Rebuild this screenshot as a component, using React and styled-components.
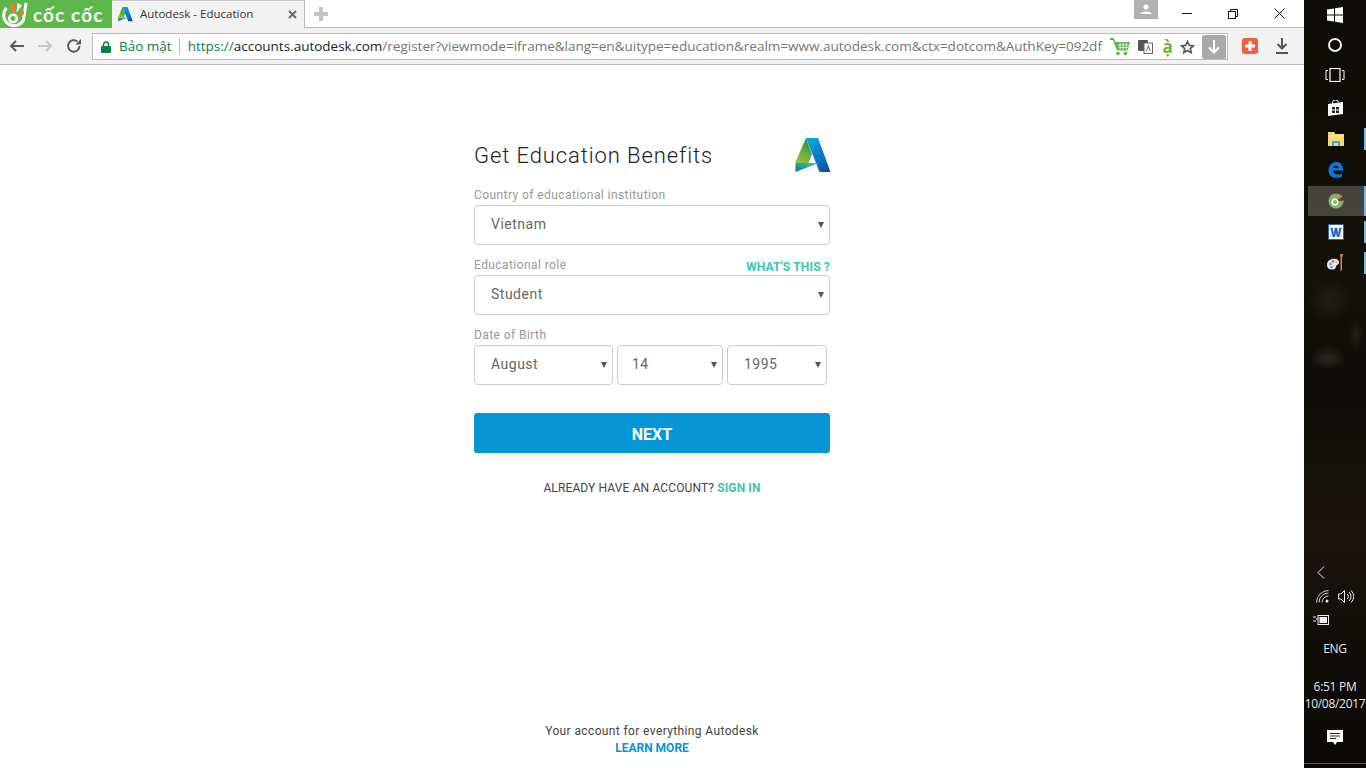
import React from 'react';
import styled, { createGlobalStyle } from 'styled-components';

const Global = createGlobalStyle`
    html, body { margin: 0; padding: 0; height: 100%; background: #fff; overflow: hidden; }
    #root { height: 100%; }
    * { box-sizing: border-box; }
`;

const Screen = styled.div`
    display: flex;
    width: 1366px;
    height: 768px;
    overflow: hidden;
`;

const Browser = styled.div`
    display: flex;
    flex-direction: column;
    width: 1304px;
    height: 100%;
    background: #fff;
`;

const TabStrip = styled.div`
    display: flex;
    align-items: stretch;
    height: 28px;
    border-bottom: 1px solid #b8b8b8;
    padding-right: 2px;
`;

const Brand = styled.div`
    display: flex;
    align-items: center;
    gap: 4px;
    width: 112px;
    height: 28px;
    background: #5cb84a;
    padding-left: 1px;
    color: #fff;
    font: 700 19px "Lato", sans-serif;
    letter-spacing: 1.1px;
    white-space: nowrap;
`;

const Tab = styled.div`
    display: flex;
    align-items: center;
    width: 193px;
    height: 28px;
    padding: 0 7px 0 6px;
    background: #f2f2f2;
    border-right: 1px solid #b8b8b8;
    border-top: 1px solid #c8c8c8;
    color: #333;
    font: 11.5px "Open Sans", sans-serif;
    gap: 7px;
`;

const TabTitle = styled.span`
    flex: 1;
    white-space: nowrap;
    padding-bottom: 2px;
`;

const NewTab = styled.div`
    display: flex;
    align-items: center;
    padding-left: 9px;
    height: 27px;
`;

const Avatar = styled.div`
    display: flex;
    align-items: center;
    justify-content: center;
    margin-left: auto;
    margin-right: 6px;
    width: 24px;
    height: 19px;
    background: #b1b1b1;
`;

const WinButton = styled.div`
    display: flex;
    align-items: center;
    justify-content: center;
    width: 46px;
    height: 27px;
`;

const Toolbar = styled.div`
    display: flex;
    align-items: center;
    height: 37px;
    background: #f2f2f2;
    border-bottom: 1px solid #b9b9b9;
    padding-left: 8px;
`;

const NavButton = styled.div`
    display: flex;
    align-items: center;
    justify-content: center;
    width: 18px;
    height: 18px;
    margin-right: ${(p) => p.$gap}px;
`;

const Omnibox = styled.div`
    display: flex;
    align-items: center;
    width: 1136px;
    height: 27px;
    margin-top: 1px;
    background: #fff;
    border: 1px solid #bdbdbd;
    padding: 0 1px 0 8px;
    font: 13.5px "Open Sans", sans-serif;
    white-space: nowrap;
`;

const Secure = styled.span`
    color: #0b8043;
    margin-left: 8px;
    padding-right: 7px;
    border-right: 1px solid #bdbdbd;
    line-height: 17px;
    margin-bottom: 1px;
`;

const Url = styled.span`
    margin-left: 8px;
    width: 922px;
    overflow: hidden;
    color: #757575;
    padding-bottom: 2px;
`;

const UrlScheme = styled.span`
    color: #0b8043;
`;

const UrlHost = styled.span`
    color: #222;
`;

const BoxIcon = styled.span`
    display: flex;
    align-items: center;
    justify-content: center;
    width: ${(p) => p.$w}px;
    height: 24px;
`;

const Accent = styled.span`
    color: #5fb83f;
    font: 700 17px "Open Sans", sans-serif;
`;

const GreyDownload = styled.span`
    display: flex;
    align-items: center;
    justify-content: center;
    width: 24px;
    height: 24px;
    background: #a9a9a9;
    border-radius: 2px;
`;

const ExtensionRow = styled.div`
    display: flex;
    align-items: center;
    gap: 16px;
    margin-left: 14px;
`;

const Page = styled.main`
    flex: 1;
    display: flex;
    flex-direction: column;
    align-items: center;
    font-family: "Roboto", sans-serif;
    padding-bottom: 11px;
`;

const Form = styled.form`
    width: 356px;
    margin-top: 73px;
`;

const Heading = styled.div`
    display: flex;
    align-items: flex-start;
    justify-content: space-between;
    height: 47px;
    margin-right: -1px;
`;

const Title = styled.h1`
    margin: 5px 0 0;
    font-size: 22px;
    line-height: 26px;
    font-weight: 300;
    letter-spacing: 0.9px;
    color: #222;
`;

const LabelRow = styled.div`
    display: flex;
    justify-content: space-between;
    align-items: flex-end;
    height: 20px;
`;

const Label = styled.label`
    font-size: 12px;
    line-height: 16px;
    letter-spacing: 0.42px;
    color: #999;
    padding-bottom: 2px;
`;

const Help = styled.a`
    font-size: 12px;
    line-height: 14px;
    font-weight: 700;
    letter-spacing: 0.17px;
    color: #3cc4b4;
    margin-bottom: 1px;
`;

const SelectWrap = styled.div`
    position: relative;
    width: ${(p) => p.$w}px;
    height: 40px;

    &::after {
        content: '';
        position: absolute;
        right: 6px;
        top: 17px;
        border-left: 3px solid transparent;
        border-right: 3px solid transparent;
        border-top: 6px solid #555;
        pointer-events: none;
    }
`;

const Select = styled.select`
    appearance: none;
    display: block;
    width: 100%;
    height: 100%;
    padding: 0 0 2px ${(p) => p.$pad}px;
    border: 1px solid #ccc;
    border-radius: 4px;
    background: #fff;
    font: 14px "Roboto", sans-serif;
    letter-spacing: 0.5px;
    color: #666;
`;

const Field = styled.div`
    margin-bottom: 10px;
`;

const DateRow = styled.div`
    display: flex;
    gap: 4px;
`;

const Next = styled.button`
    display: block;
    width: 100%;
    height: 40px;
    margin-top: 28px;
    padding: 2px 0 0;
    border: 0;
    border-radius: 3px;
    background: #0696d7;
    color: #fff;
    font: 700 16px "Roboto", sans-serif;
`;

const SignInLine = styled.p`
    margin: 27px 0 0;
    text-align: center;
    font-size: 12px;
    line-height: 16px;
    letter-spacing: 0.13px;
    color: #444;
`;

const SignIn = styled.a`
    font-weight: 700;
    color: #3cc4b4;
`;

const Footer = styled.footer`
    margin-top: auto;
    text-align: center;
    font-size: 12px;
    line-height: 17px;
    letter-spacing: 0.38px;
    color: #444;
`;

const LearnMore = styled.a`
    display: block;
    font-weight: 700;
    letter-spacing: 0;
    color: #0696d7;
`;

const Taskbar = styled.aside`
    display: flex;
    flex-direction: column;
    width: 62px;
    height: 100%;
    color: #e8e8e8;
    background:
        radial-gradient(ellipse 18px 12px at 24px 358px, rgba(90, 84, 70, 0.4), transparent),
        radial-gradient(ellipse 22px 22px at 26px 300px, rgba(60, 56, 46, 0.35), transparent),
        radial-gradient(ellipse 8px 18px at 52px 335px, rgba(70, 64, 54, 0.3), transparent),
        linear-gradient(180deg, #0d0b07 0%, #14110a 35%, #0e0c09 50%, #1a150d 70%, #0f0c08 85%, #0a0806 100%);
    font: 12px "Open Sans", sans-serif;
`;

const SystemRow = styled.div`
    display: flex;
    align-items: center;
    justify-content: center;
    width: 100%;
    height: 30px;
    padding-left: 1px;
    padding-right: 1px;
`;

const Apps = styled.div`
    margin-top: 3px;
`;

const AppRow = styled.div`
    position: relative;
    display: flex;
    align-items: center;
    justify-content: center;
    height: ${(p) => p.$active ? 30 : 31}px;
    margin-bottom: ${(p) => p.$active ? 1 : 0}px;
    padding-left: ${(p) => p.$active ? 0 : 1}px;
    padding-bottom: 1px;
    margin-left: ${(p) => (p.$active ? '4px' : '0')};
    padding-right: ${(p) => (p.$active ? '3px' : '0')};
    background: ${(p) => (p.$active ? 'rgba(255,255,255,0.22)' : 'transparent')};

    &::after {
        content: '';
        display: ${(p) => (p.$open ? 'block' : 'none')};
        position: absolute;
        right: 0;
        top: ${(p) => (p.$active ? 0 : 4)}px;
        bottom: ${(p) => (p.$active ? 0 : 5)}px;
        width: 2px;
        background: #76b9ed;
    }
`;

const Tray = styled.div`
    margin-top: auto;
    margin-bottom: 4px;
    display: flex;
    flex-direction: column;
    align-items: center;
    border-bottom: 1px solid #555;
`;

const TrayRow = styled.div`
    display: flex;
    align-items: center;
    justify-content: ${(p) => p.$align || 'center'};
    width: 100%;
    height: ${(p) => p.$h}px;
    gap: 9px;
    padding-left: ${(p) => p.$left || 0}px;
`;

const TrayText = styled.div`
    width: 100%;
    text-align: center;
    line-height: 17px;
    white-space: nowrap;
    letter-spacing: -0.3px;
    margin-top: ${(p) => p.$top || 0}px;
`;

function AutodeskLogo({ size, id }) {
    return (
        <svg width={size} height={size * 34 / 36} viewBox="0 0 36 34">
            <defs>
                <linearGradient id={`${id}b`} x1="0.2" y1="0" x2="0.8" y2="1">
                    <stop offset="0" stopColor="#05a5e2" />
                    <stop offset="0.55" stopColor="#0a7cc4" />
                    <stop offset="1" stopColor="#0f4f9f" />
                </linearGradient>
                <linearGradient id={`${id}g`} x1="0.7" y1="0" x2="0.3" y2="1">
                    <stop offset="0" stopColor="#2f8f3a" />
                    <stop offset="1" stopColor="#8cc440" />
                </linearGradient>
                <linearGradient id={`${id}t`} x1="1" y1="0" x2="0" y2="1">
                    <stop offset="0" stopColor="#46c8b8" />
                    <stop offset="1" stopColor="#0c7f6e" />
                </linearGradient>
            </defs>
            <path d="M11 0 H23 L35.500 34 H24.500 L11 0 Z" fill={`url(#${id}b)`} />
            <path d="M11 0 L0.500 24 L0.500 25 H13.500 L17 16 Z" fill={`url(#${id}g)`} />
            <path d="M0.500 25 H24 L0.500 34 Z" fill={`url(#${id}t)`} />
        </svg>
    );
}

function CocCocMark() {
    return (
        <svg width="28" height="28" viewBox="0 0 28 28">
            <path d="M5.500 8 A10.500 10.500 0 1 0 22.500 20 L25 3" fill="none" stroke="#fff" strokeWidth="3" />
            <circle cx="12" cy="18.500" r="3.800" fill="none" stroke="#fff" strokeWidth="2.600" />
            <path d="M8.500 5 L13.500 3.500 L14 13 L12 13 Z" fill="#f47b2a" />
            <path d="M15.500 12.500 L16.500 3 L21 5.500 Z" fill="#fff" />
            <path d="M16 15.500 L22.500 10.500 L23.500 14.500 Z" fill="#f47b2a" />
        </svg>
    );
}

function Chevron({ flip, color }) {
    return (
        <svg width="16" height="14" viewBox="0 0 16 14" fill="none" stroke={color} strokeWidth="2">
            {flip
                ? <path d="M1 7 H14 M9 2 L14 7 L9 12" />
                : <path d="M15 7 H2 M7 2 L2 7 L7 12" />}
        </svg>
    );
}

function WinIcon() {
    return (
        <svg width="16" height="16" viewBox="0 0 16 16" fill="#fff">
            <path d="M0 2.500 L7 1.500 V7.500 H0 Z M8 1.300 L16 0 V7.500 H8 Z M0 8.500 H7 V14.500 L0 13.500 Z M8 8.500 H16 V16 L8 14.700 Z" />
        </svg>
    );
}

function WordIcon() {
    return (
        <svg width="16" height="16" viewBox="0 0 16 16">
            <rect x="0.500" y="0.500" width="15" height="15" fill="#fff" stroke="#2a5fae" />
            <rect x="2" y="3" width="12" height="10" fill="#dfe9f6" />
            <path d="M2.500 4 L4.800 13 H7 L8 8 L9 13 H11.200 L13.500 4 H11.500 L10.200 10 L9 4 H7 L5.800 10 L4.500 4 Z" fill="#1f5fbf" />
        </svg>
    );
}

export default function App() {
    return (
        <Screen>
            <Global />
            <Browser>
                <TabStrip>
                    <Brand>
                        <CocCocMark />
                        <span>cốc cốc</span>
                    </Brand>
                    <Tab>
                        <AutodeskLogo size={15} id="tab" />
                        <TabTitle>Autodesk - Education</TabTitle>
                        <svg width="9" height="9" viewBox="0 0 9 9" stroke="#666" strokeWidth="1.800"><path d="M1 1 L8 8 M8 1 L1 8" /></svg>
                    </Tab>
                    <NewTab>
                        <svg width="14" height="14" viewBox="0 0 14 14" fill="#c4c4c4"><path d="M5 0 H9 V5 H14 V9 H9 V14 H5 V9 H0 V5 H5 Z" /></svg>
                    </NewTab>
                    <Avatar>
                        <svg width="12" height="11" viewBox="0 0 12 11" fill="#fff"><circle cx="6" cy="3" r="2.500" /><path d="M0 10 C1 6.500 11 6.500 12 10 Z" /></svg>
                    </Avatar>
                    <WinButton><svg width="10" height="1"><rect width="10" height="1" fill="#111" /></svg></WinButton>
                    <WinButton>
                        <svg width="10" height="10" viewBox="0 0 10 10" fill="none" stroke="#111"><path d="M2.500 2.500 V0.500 H9.500 V7.500 H7.500" /><rect x="0.500" y="2.500" width="7" height="7" /></svg>
                    </WinButton>
                    <WinButton>
                        <svg width="11" height="11" viewBox="0 0 11 11" stroke="#111"><path d="M0.500 0.500 L10.500 10.500 M10.500 0.500 L0.500 10.500" /></svg>
                    </WinButton>
                </TabStrip>
                <Toolbar>
                    <NavButton $gap={10}><Chevron color="#5a5a5a" /></NavButton>
                    <NavButton $gap={11}><Chevron flip color="#c8c8c8" /></NavButton>
                    <NavButton $gap={9}>
                        <svg width="16" height="16" viewBox="0 0 16 16" fill="none" stroke="#5a5a5a" strokeWidth="2"><path d="M13.500 8 A5.700 5.700 0 1 1 11.500 3.600" /><path d="M9.500 6.500 H15 V1 Z" fill="#5a5a5a" stroke="none" /></svg>
                    </NavButton>
                    <Omnibox>
                        <svg width="10" height="12" viewBox="0 0 10 12"><path d="M2.500 5 V3.500 A2.500 2.500 0 0 1 7.500 3.500 V5" fill="none" stroke="#0b8043" strokeWidth="1.500" /><rect y="5" width="10" height="7" rx="1" fill="#0b8043" /></svg>
                        <Secure>Bảo mật</Secure>
                        <Url>
                            <UrlScheme>https://</UrlScheme>
                            <UrlHost>accounts.autodesk.com</UrlHost>
                            /register?viewmode=iframe&amp;lang=en&amp;uitype=education&amp;realm=www.autodesk.com&amp;ctx=dotcom&amp;AuthKey=092df
                        </Url>
                        <BoxIcon $w={20}>
                            <svg width="20" height="18" viewBox="0 0 20 18"><path d="M0 0 H3.500 L5.500 4 H20 L17.500 12.500 H7 L3 2 H0 Z" fill="#5fae4a" /><path d="M7.500 7 H18.500 M8.500 9.500 H18 M10 4.500 V12 M13 4.500 V12 M16 4.500 V12" stroke="#fff" strokeWidth="0.700" /><circle cx="8" cy="15.500" r="1.800" fill="#5fae4a" /><circle cx="15.500" cy="15.500" r="1.800" fill="#5fae4a" /></svg>
                        </BoxIcon>
                        <BoxIcon $w={32}>
                            <svg width="15" height="14" viewBox="0 0 15 14"><rect width="10" height="11" rx="1" fill="#555" /><rect x="6" y="3" width="8.500" height="10.500" fill="#fff" stroke="#666" /><path d="M8.500 11 L10.300 5.500 L12.200 11" fill="none" stroke="#666" /></svg>
                        </BoxIcon>
                        <BoxIcon $w={12}><Accent>ạ̀</Accent></BoxIcon>
                        <BoxIcon $w={28}>
                            <svg width="15" height="14" viewBox="0 0 15 14" fill="none" stroke="#555" strokeWidth="1.600"><path d="M7.500 1.500 L9.300 5.400 L13.500 5.800 L10.300 8.600 L11.300 12.700 L7.500 10.500 L3.700 12.700 L4.700 8.600 L1.500 5.800 L5.700 5.400 Z" /></svg>
                        </BoxIcon>
                        <GreyDownload>
                            <svg width="12" height="14" viewBox="0 0 12 14" fill="none" stroke="#fff" strokeWidth="2"><path d="M6 0 V12 M1 7.500 L6 12.500 L11 7.500" /></svg>
                        </GreyDownload>
                    </Omnibox>
                    <ExtensionRow>
                        <svg width="16" height="16" viewBox="0 0 16 16"><rect width="16" height="16" rx="2.500" fill="#f2603c" /><path d="M6.500 3 H9.500 V6.500 H13 V9.500 H9.500 V13 H6.500 V9.500 H3 V6.500 H6.500 Z" fill="#fff" /></svg>
                        <svg width="16" height="16" viewBox="0 0 16 16" fill="none" stroke="#555" strokeWidth="2"><path d="M8 0 V10 M3.500 6 L8 10.500 L12.500 6 M2 15 H14" /></svg>
                    </ExtensionRow>
                </Toolbar>
                <Page>
                    <Form>
                        <Heading>
                            <Title>Get Education Benefits</Title>
                            <AutodeskLogo size={36} id="hero" />
                        </Heading>
                        <Field>
                            <LabelRow><Label>Country of educational institution</Label></LabelRow>
                            <SelectWrap $w={356}>
                                <Select $pad={16} defaultValue="Vietnam"><option>Vietnam</option></Select>
                            </SelectWrap>
                        </Field>
                        <Field>
                            <LabelRow>
                                <Label>Educational role</Label>
                                <Help>WHAT'S THIS ?</Help>
                            </LabelRow>
                            <SelectWrap $w={356}>
                                <Select $pad={16} defaultValue="Student"><option>Student</option></Select>
                            </SelectWrap>
                        </Field>
                        <LabelRow><Label>Date of Birth</Label></LabelRow>
                        <DateRow>
                            <SelectWrap $w={139}><Select $pad={16} defaultValue="August"><option>August</option></Select></SelectWrap>
                            <SelectWrap $w={106}><Select $pad={14} defaultValue="14"><option>14</option></Select></SelectWrap>
                            <SelectWrap $w={100}><Select $pad={16} defaultValue="1995"><option>1995</option></Select></SelectWrap>
                        </DateRow>
                        <Next type="button">NEXT</Next>
                        <SignInLine>ALREADY HAVE AN ACCOUNT? <SignIn>SIGN IN</SignIn></SignInLine>
                    </Form>
                    <Footer>
                        Your account for everything Autodesk
                        <LearnMore>LEARN MORE</LearnMore>
                    </Footer>
                </Page>
            </Browser>
            <Taskbar>
                <SystemRow><WinIcon /></SystemRow>
                <SystemRow>
                    <svg width="14" height="14" viewBox="0 0 14 14" fill="none" stroke="#eee" strokeWidth="2"><circle cx="7" cy="7" r="6" /></svg>
                </SystemRow>
                <SystemRow>
                    <svg width="20" height="14" viewBox="0 0 20 14" fill="none" stroke="#fff"><rect x="5" y="0.500" width="10" height="13" strokeWidth="1.200" /><path d="M3 2.500 H1 V11.500 H3 M17 2.500 H19 V11.500 H17" /></svg>
                </SystemRow>
                <Apps>
                    <AppRow>
                        <svg width="15" height="16" viewBox="0 0 15 16"><path d="M0 4 L15 2 V14 L0 16 Z" fill="#fff" /><path d="M4.500 4 V2.500 A3 2.500 0 0 1 10.500 2.500 V3.500" fill="none" stroke="#fff" /><path d="M4 7 H7 V9.500 H4 Z M8 7 H11 V9.500 H8 Z M4 10.500 H7 V13 H4 Z M8 10.500 H11 V13 H8 Z" fill="#222" /></svg>
                    </AppRow>
                    <AppRow $open>
                        <svg width="16" height="14" viewBox="0 0 16 14"><path d="M0 0 H6 L7.500 2 H16 V14 H0 Z" fill="#f7d774" /><path d="M0 3 H16 V4.500 H0 Z" fill="#fbe7a6" /><path d="M4 14 V9 H12 V14 H10 V11 H6 V14 Z" fill="#3f9fe0" /></svg>
                    </AppRow>
                    <AppRow>
                        <svg width="15" height="16" viewBox="0 0 15 16"><path d="M0.500 8 C1 2.500 5 0 8.500 0 C12.500 0 15 3 15 8.500 H5 C5.200 12 9.500 13.500 13.800 11.500 V14.800 C8 17 0 15.500 0.500 8 Z M5.200 6 H10.500 C10.500 3 5.800 3 5.200 6 Z" fill="#0a78d4" /></svg>
                    </AppRow>
                    <AppRow $active $open>
                        <svg width="16" height="16" viewBox="0 0 16 16"><circle cx="8" cy="8" r="7.500" fill="#7cb96a" /><path d="M8 8 L16 0 V8 Z" fill="#45433f" /><circle cx="7" cy="9" r="2.800" fill="none" stroke="#fff" strokeWidth="1.500" /><path d="M7 1.500 L9.500 1 L8.500 6 Z M13 2 L14.500 3.500 L10.500 7 Z M15.500 7 V9 L11.500 8.800 Z" fill="#f47b2a" /></svg>
                    </AppRow>
                    <AppRow $open><WordIcon /></AppRow>
                    <AppRow $open>
                        <svg width="17" height="18" viewBox="0 0 17 18"><path d="M0 11 C0 6 5 4 9 5 C13 6 13 10 10 11 C8 12 10 15 6 15.500 C2 16 0 14 0 11 Z" fill="#dfeaf5" /><circle cx="3.500" cy="10" r="1.300" fill="#3f9fe0" /><circle cx="6" cy="7.500" r="1.300" fill="#e0503c" /><circle cx="4.500" cy="13" r="1.300" fill="#5cb84a" /><circle cx="9.500" cy="8" r="1.200" fill="#f0c040" /><path d="M13 0 H16 L15 4 L15 16 L13.500 17 L13.500 4 Z" fill="#e8862c" /></svg>
                    </AppRow>
                </Apps>
                <Tray>
                    <TrayRow $h={20} $align="flex-start" $left={13}>
                        <svg width="8" height="13" viewBox="0 0 8 13" fill="none" stroke="#eee"><path d="M7 0.500 L1 6.500 L7 12.500" /></svg>
                    </TrayRow>
                    <TrayRow $h={28}>
                        <svg width="13" height="13" viewBox="0 0 13 13" fill="none" stroke="#ccc"><path d="M0.500 12.500 A12 12 0 0 1 12.500 0.500 M3 12.500 A9.500 9.500 0 0 1 12.500 3 M6 12.500 A6.500 6.500 0 0 1 12.500 6" /><circle cx="11" cy="11" r="1.500" fill="#eee" stroke="none" /></svg>
                        <svg width="16" height="13" viewBox="0 0 16 13" fill="none" stroke="#eee"><path d="M0.500 4 H3 L6.500 0.500 V12.500 L3 9 H0.500 Z M9 4 A3 3 0 0 1 9 9 M11 2 A6 6 0 0 1 11 11 M13 0.500 A8 8 0 0 1 13 12.500" /></svg>
                    </TrayRow>
                    <TrayRow $h={20} $align="flex-start" $left={9}>
                        <svg width="16" height="10" viewBox="0 0 16 10"><path d="M0 2 H3 M0 6 H3 M3 4 H5" stroke="#eee" /><rect x="5" y="0.500" width="10.500" height="9" fill="none" stroke="#eee" /><rect x="6.500" y="2" width="7.500" height="6" fill="#eee" /></svg>
                    </TrayRow>
                    <TrayText $top={10}>ENG</TrayText>
                    <TrayText $top={21}>6:51 PM</TrayText>
                    <TrayText>10/08/2017</TrayText>
                    <TrayRow $h={51}>
                        <svg width="16" height="16" viewBox="0 0 16 16"><path d="M0 0 H16 V12 H10 L8 15 L6 12 H0 Z" fill="#fff" /><path d="M3 3.500 H13 M3 6 H13 M3 8.500 H9" stroke="#222" /></svg>
                    </TrayRow>
                </Tray>
            </Taskbar>
        </Screen>
    );
}
